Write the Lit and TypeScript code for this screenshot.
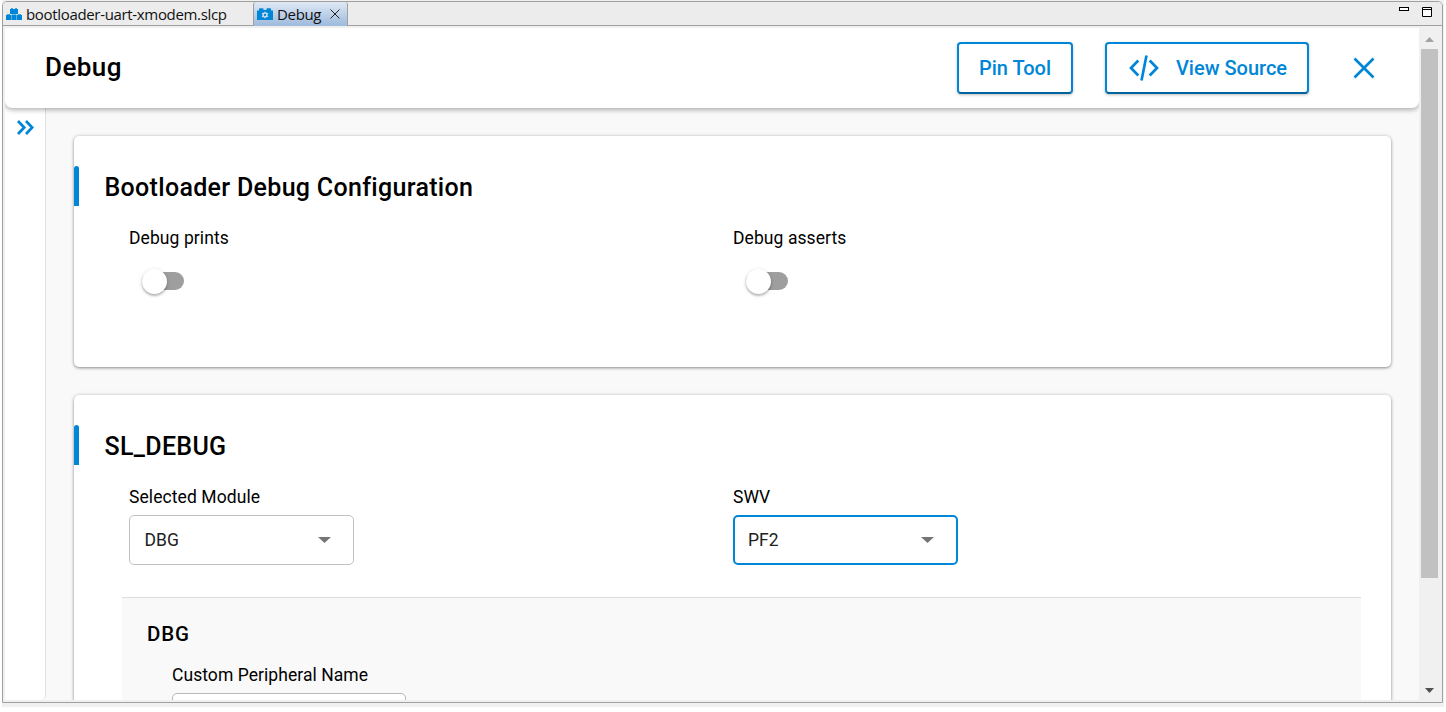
import { LitElement, html, css } from "lit";
import { customElement, property } from "lit/decorators.js";

@customElement("toggle-field")
class ToggleField extends LitElement {
  @property() label = "";
  static styles = css`
    :host { display: block; }
    .label { font-size: 17.5px; line-height: 24px; letter-spacing: 0.08px; }
    .track { width: 42.5px; height: 18px; margin: 22px 0 0 12.5px; border-radius: 9px; background: #9e9e9e; display: flex; align-items: center; }
    .knob { width: 25px; height: 25px; flex: none; border-radius: 50%; background: #fff; box-shadow: 0 2px 2px rgba(0,0,0,.2), 0 1px 4px rgba(0,0,0,.16); }
  `;
  render() {
    return html`<div class="label">${this.label}</div>
      <div class="track"><div class="knob"></div></div>`;
  }
}

@customElement("select-field")
class SelectField extends LitElement {
  @property() label = "";
  @property() value = "";
  @property({ type: Boolean, reflect: true }) active = false;
  static styles = css`
    :host { display: block; }
    .label { font-size: 17.5px; line-height: 24px; letter-spacing: 0.08px; }
    .box { box-sizing: border-box; width: 225px; height: 50px; margin-top: 6px; padding: 0 22px 0 14.5px; border: 1px solid #c2c2c2; border-radius: 5px; display: flex; align-items: center; justify-content: space-between; font-size: 17.5px; color: #212121; background: #fff; }
    :host([active]) .box { border: 2px solid #0086d6; padding: 0 22px 0 13px; }
    svg { display: block; }
  `;
  render() {
    return html`<div class="label">${this.label}</div>
      <div class="box"><span>${this.value}</span>
        <svg width="13" height="6" viewBox="0 0 13 6"><path d="M0 0H13L6.5 6Z" fill="#757575"/></svg></div>`;
  }
}

@customElement("app-root")
class AppRoot extends LitElement {
  static styles = css`
    :host { display: block; width: 1446px; height: 712px; overflow: hidden; background: #fff; font-family: Roboto, "Liberation Sans", sans-serif; color: #000; }
    * { box-sizing: border-box; }
    svg { display: block; flex: none; }
    .outer { margin-left: 2px; width: 1442px; height: 707px; background: #f0f0f0; padding: 1px 1px 4px 0; }
    .window { height: 702px; border: 1px solid #a0a0a0; border-radius: 5px 5px 0 0; background: #f0f0f0; overflow: hidden; }
    .tabs { height: 24px; border-bottom: 1px solid #a0a0a0; display: flex; background: #ececec; font: 15px/24px "Open Sans", "Noto Sans", sans-serif; color: #111; }
    .tab { display: flex; align-items: center; width: 250px; padding-left: 3px; }
    .tab span { letter-spacing: -0.33px; margin-left: 4px; white-space: nowrap; }
    .tab.on { width: 95px; height: 24px; border: 1px solid #a0a0a0; border-width: 0 1px; border-radius: 3px 3px 0 0; background: linear-gradient(#dfe9f4, #9db9dc); }
    .tab.on svg + span { margin-right: 9px; }
    .controls { margin-left: auto; padding: 4px 10px 0 0; display: flex; gap: 13px; }
    .view { margin: 2px 2px 0; height: 672px; display: flex; }
    .page { width: 1414px; height: 672px; background: #f9f9f9; display: flex; flex-direction: column; overflow: hidden; }
    .head { height: 80px; flex: none; position: relative; background: #fff; border-radius: 0 0 7px 7px; box-shadow: 0 2px 5px rgba(0,0,0,.3); display: flex; align-items: center; padding: 0 44px 0 40px; }
    .head h1 { margin: 0 auto 2px 0; font-size: 26px; font-weight: 500; letter-spacing: 0.45px; }
    .btn { height: 52px; border: 2px solid #0086d6; border-bottom-color: #00659f; border-radius: 4px; display: flex; align-items: center; justify-content: center; color: #0086d6; font-size: 20px; font-weight: 500; background: #fff; box-shadow: 0 1px 3px rgba(0,0,0,.25); }
    .pin { width: 116px; margin-right: 32px; }
    .source { width: 204px; margin-right: 44px; gap: 17px; padding-left: 2px; }
    .body { flex: 1; min-height: 0; display: flex; }
    .side { width: 41px; flex: none; background: #fff; border-right: 1px solid #e0e0e0; border-radius: 0 0 5px 0; padding: 12px 0 0 12px; }
    .main { padding: 28px 0 0 28px; width: 1345px; }
    .card { width: 1317px; height: 231px; background: #fff; border-radius: 5px; box-shadow: 0 1px 3px rgba(0,0,0,.4), 0 0 5px rgba(0,0,0,.1); padding-top: 30px; margin-bottom: 28px; }
    .card.tall { height: 500px; }
    .title { height: 40px; display: flex; align-items: center; }
    .bar { width: 5px; height: 40px; background: #0086d6; border-radius: 3px 3px 0 0; }
    h2 { margin: 3px 0 0 25.5px; font-size: 25px; line-height: 34px; font-weight: 500; letter-spacing: 0.31px; }
    .fields { display: grid; grid-template-columns: 604px 1fr; margin: 20px 0 0 55px; }
    .sub { margin: 32px 30px 0 48px; height: 300px; background: #f9f9f9; border-top: 1px solid #dcdcdc; padding: 22px 0 0 25px; }
    h3 { margin: 0; font-size: 20.5px; line-height: 28px; font-weight: 500; letter-spacing: 0.8px; }
    .name { margin: 15px 0 0 25px; font-size: 17.5px; line-height: 24px; letter-spacing: 0.06px; }
    .input { margin: 6px 0 0 25px; width: 234px; height: 50px; border: 1px solid #b8b8b8; border-radius: 5px; background: #fff; }
    .scroll { width: 21px; padding: 9px 0 7px; display: flex; flex-direction: column; align-items: center; }
    .thumb { width: 17px; height: 529px; margin: 7px 0 auto; background: #c1c1c1; }
  `;
  render() {
    return html`
    <div class="outer"><div class="window">
      <div class="tabs">
        <div class="tab">
          <svg width="16" height="12" viewBox="0 0 16 12" fill="#0086d6"><path d="M4 6V1H5V.3H7V1H9V.3H11V1H12V6ZM0 12V7H1V6.300H4V7H5V12ZM5.400 12V6.500H10.600V12ZM11 12V7H12V6.300H15V7H16V12Z"/></svg>
          <span>bootloader-uart-xmodem.slcp</span>
        </div>
        <div class="tab on">
          <svg width="16" height="12" viewBox="0 0 16 12"><path d="M0 2.500H2V1Q2 .2 3 .2H5.500Q6.500 .2 6.500 1V2H9.500V1Q9.500 .2 10.500 .2H13Q14 .2 14 1V2.500H16V12H0Z" fill="#0086d6"/><circle cx="8" cy="7" r="1.900" fill="none" stroke="#c4dbf0" stroke-width="1.500"/><path d="M8 3.700V4.700M8 9.300V10.300M5 5.300L6 5.900M11 8.700L10 8.100M5 8.700L6 8.100M11 5.300L10 5.900" stroke="#c4dbf0" stroke-width="1.300"/></svg>
          <span>Debug</span>
          <svg width="10" height="10" viewBox="0 0 10 10"><path d="M.5 .5L9.500 9.500M9.500 .5L.5 9.500" stroke="#222" stroke-width="1"/></svg>
        </div>
        <div class="controls">
          <svg width="10" height="12" viewBox="0 0 10 12"><rect x=".5" y="1.500" width="9" height="3" fill="#fff" stroke="#000"/></svg>
          <svg width="10" height="12" viewBox="0 0 10 12"><path d="M.5 1.500H9.500V10.500H.5ZM.5 3.500H9.500" fill="#fff" stroke="#000"/></svg>
        </div>
      </div>
      <div class="view">
        <div class="page">
          <div class="head">
            <h1>Debug</h1>
            <div class="btn pin">Pin Tool</div>
            <div class="btn source">
              <svg width="30" height="26" viewBox="0 0 30 26" fill="none" stroke="#0086d6" stroke-width="2.700"><path d="M9.300 5.500L2 13L9.300 20.500M20.700 5.500L28 13L20.700 20.500M17.500 .5L12.500 25.500"/></svg>
              <span>View Source</span>
            </div>
            <svg width="22" height="22" viewBox="0 0 22 22"><path d="M1.500 1.500L20.500 20.500M20.500 1.500L1.500 20.500" stroke="#0086d6" stroke-width="2.700"/></svg>
          </div>
          <div class="body">
            <div class="side"><svg width="17" height="15" viewBox="0 0 17 15"><path d="M1 1L7.200 7.500L1 14M9 1L15.200 7.500L9 14" fill="none" stroke="#0086d6" stroke-width="2.700"/></svg></div>
            <div class="main">
              <div class="card">
                <div class="title"><div class="bar"></div><h2>Bootloader Debug Configuration</h2></div>
                <div class="fields">
                  <toggle-field label="Debug prints"></toggle-field>
                  <toggle-field label="Debug asserts"></toggle-field>
                </div>
              </div>
              <div class="card tall">
                <div class="title"><div class="bar"></div><h2>SL_DEBUG</h2></div>
                <div class="fields">
                  <select-field label="Selected Module" value="DBG"></select-field>
                  <select-field label="SWV" value="PF2" active></select-field>
                </div>
                <div class="sub"><h3>DBG</h3><div class="name">Custom Peripheral Name</div><div class="input"></div></div>
              </div>
            </div>
          </div>
        </div>
        <div class="scroll">
          <svg width="9" height="5" viewBox="0 0 9 5"><path d="M0 5L4.500 0L9 5Z" fill="#a3a3a3"/></svg>
          <div class="thumb"></div>
          <svg width="9" height="5" viewBox="0 0 9 5"><path d="M0 0H9L4.500 5Z" fill="#505050"/></svg>
        </div>
      </div>
    </div></div>`;
  }
}
